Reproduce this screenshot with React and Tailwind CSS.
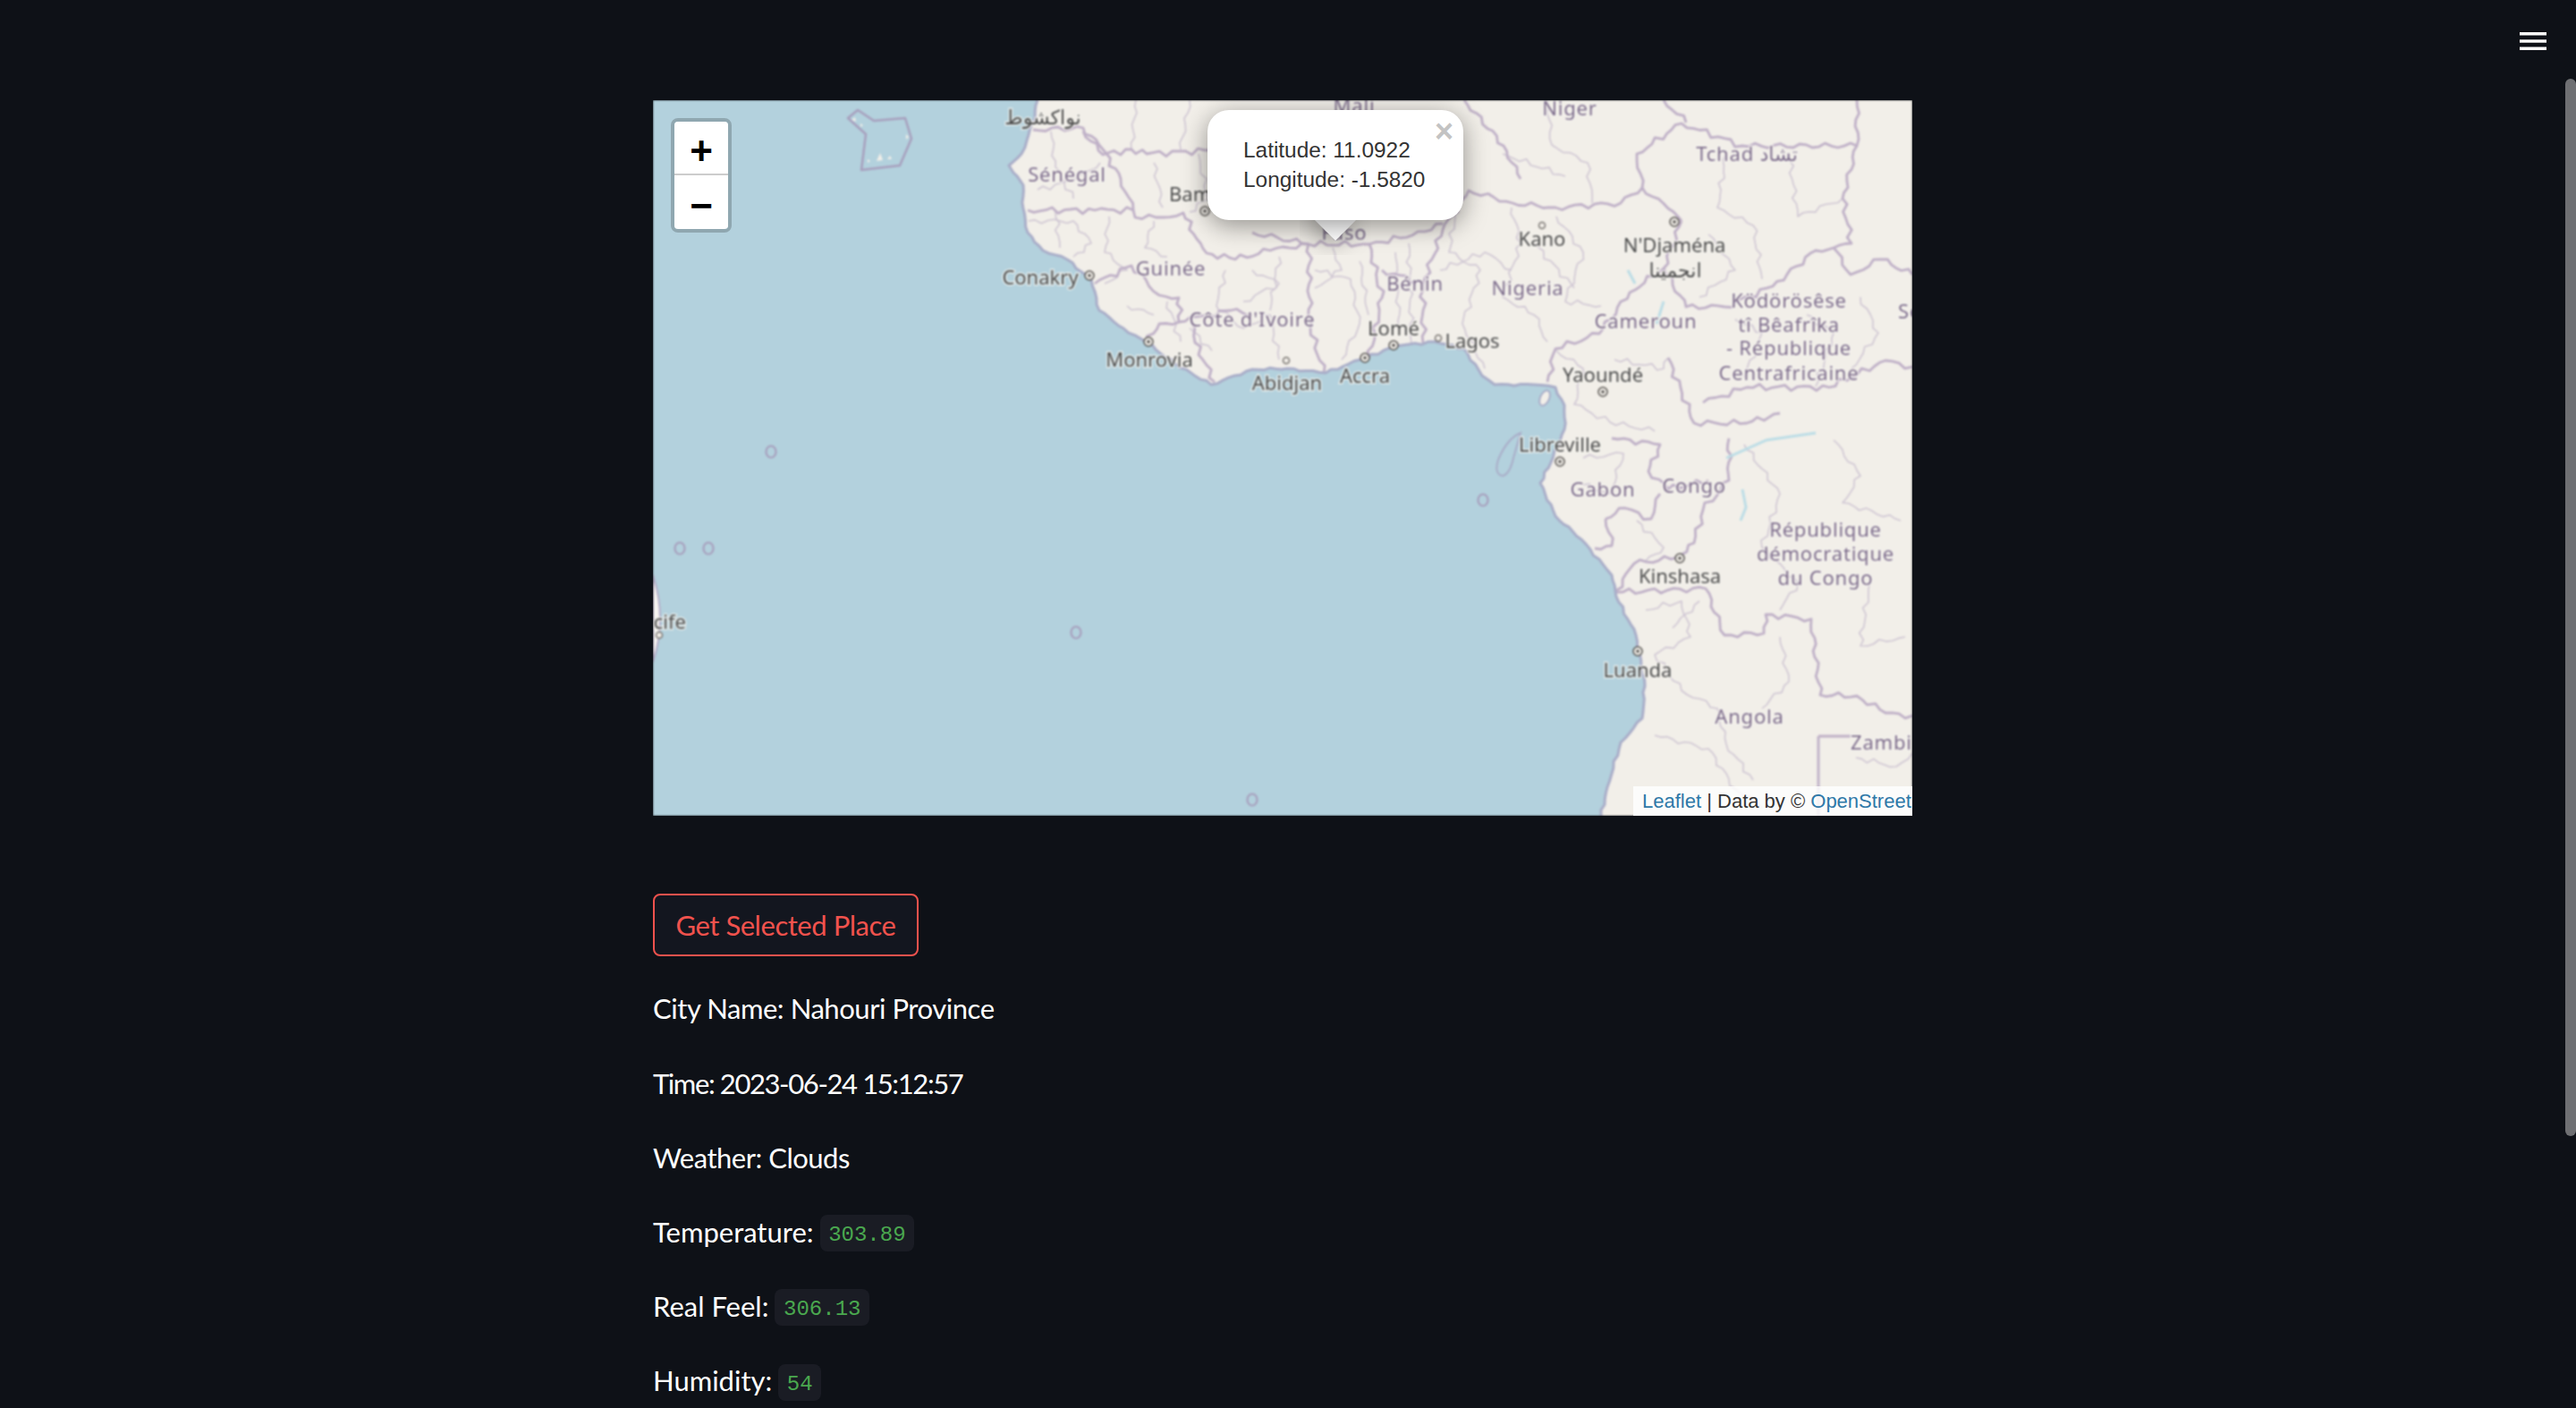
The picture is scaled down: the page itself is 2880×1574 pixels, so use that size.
import React from 'react';

const COAST = 'M430 0 L425 25 L418 45 L412 60 L398 73 L403 81 L414 95 L414 121 L419 148 L436 168 L463 178 L490 201 L499 235 L526 255 L552 271 L584 295 L624 318 L670 301 L709 300 L752 305 L791 290 L830 275 L874 270 L907 278 L927 308 L941 318 L985 318 L1009 321 L1019 341 L1019 368 L1004 405 L992 428 L1009 465 L1038 491 L1072 531 L1077 555 L1099 598 L1109 655 L1106 691 L1082 718 L1067 768 L1060 800';

// country borders
const BORDERS = [
  'M425 33 L481 31 L503 55 L523 88 L537 123 L494 123 L419 123',
  'M481 35 L503 61 L535 55 L552 60 L624 56 L700 50',
  'M537 123 L539 131 L570 131 L593 126 L608 155 L619 171 L651 178 L690 168 L733 161',
  'M494 205 L535 185 L566 218 L588 221 L588 248 L615 241 L646 235 L670 240',
  'M552 271 L566 250 L588 248',
  'M602 248 L606 271 L628 315',
  'M670 148 L733 161 L733 185 L735 255 L750 305',
  'M733 161 L801 161 L849 151 L883 138',
  'M801 161 L815 221 L801 288',
  'M861 205 L861 271',
  'M815 190 L861 205 L883 145 L912 101 L961 115 L1009 120 L1082 115 L1106 98 L1135 121 L1150 135',
  'M1150 135 L1130 188 L1092 215 L1058 261 L1009 278 L1000 315',
  'M1106 98 L1100 60 L1150 26 L1218 51 L1346 51 L1346 0',
  'M1346 51 L1330 110 L1340 160 L1320 165 L1300 168 L1252 208 L1198 231 L1155 231 L1130 188',
  'M1320 165 L1339 195 L1373 178 L1408 195',
  'M907 0 L951 51 L970 88',
  'M1155 25 L1130 0',
  'M1135 288 L1164 361 L1223 361 L1260 350',
  'M1174 338 L1223 321 L1315 321 L1378 291 L1408 298',
  'M1072 378 L1126 385 L1113 415 L1135 435 L1180 425',
  'M1203 378 L1203 425 L1174 458 L1164 495 L1145 511 L1097 518 L1077 548',
  'M1065 468 L1072 498 L1053 501',
  'M1065 468 L1087 456 L1116 468 L1126 440',
  'M1077 550 L1177 546 L1198 598 L1242 596 L1244 575 L1295 580 L1305 665 L1346 666 L1378 685 L1408 688',
];

// provinces, much paler
const THIN = [
  'M445 35 L450 75 L470 110', 'M500 70 L470 90 L430 100', 'M420 135 L470 135 L490 160 L470 175', 'M450 125 L455 165',
  'M510 130 L505 170 L530 190 L505 205', 'M560 135 L550 165 L575 175', 'M540 0 L535 55', 'M600 0 L590 55', 'M610 60 L620 110 L600 125', 'M560 70 L570 120',
  'M640 190 L630 230 L660 255 L690 240 L700 290', 'M700 175 L690 235', 'M600 255 L625 280', 'M530 230 L560 240', 'M575 225 L590 270',
  'M740 190 L780 200 L790 250 L770 290', 'M790 180 L800 240', 'M830 170 L835 260', 'M845 160 L848 272', 'M760 165 L770 190 L740 210', 'M670 190 L700 205 L660 225',
  'M900 110 L890 170 L925 190 L905 250 L930 300', 'M960 120 L970 160 L950 220 L985 240 L1000 270', 'M1010 130 L1040 170 L1020 225 L1060 230', 'M985 160 L1030 210', 'M880 190 L930 170 L960 190',
  'M1000 0 L1005 50 L1045 70 L1050 115', 'M950 60 L1020 85', 'M1200 60 L1190 120 L1230 140 L1240 200', 'M1270 60 L1280 130 L1330 110', 'M1180 150 L1210 190 L1170 220',
  'M1010 280 L1040 300 L1030 340 L1070 360 L1120 370', 'M1075 290 L1130 300 L1135 288', 'M1210 245 L1240 260 L1220 310', 'M1290 240 L1320 260 L1300 320', 'M1350 220 L1370 260 L1340 300',
  'M1040 400 L1085 395 L1070 440 L1040 430', 'M1220 385 L1260 440 L1240 500 L1280 540 L1260 570', 'M1320 380 L1350 420 L1330 450 L1395 470', 'M1360 540 L1350 610 L1400 600', 'M1260 600 L1270 650 L1240 680',
  'M1110 570 L1150 560 L1160 600 L1120 620 L1150 660 L1190 680 L1200 720 L1230 760', 'M1120 710 L1180 725 L1210 770 L1240 790', 'M1345 735 L1390 745 L1408 730', 'M1100 470 L1130 500 L1110 515', 'M1170 560 L1140 590',
];

// roughen a coarse polyline so it reads as a real border
const wiggle = (d, amp) =>
  d.split('M').filter(Boolean).map((part) => {
    const pts = part.trim().split(/\s*L\s*/).map((p) => p.split(' ').map(Number));
    let out = `M${pts[0][0]} ${pts[0][1]}`;
    pts.slice(1).forEach(([x, y], i) => {
      const [px, py] = pts[i];
      const len = Math.hypot(x - px, y - py) || 1;
      const steps = Math.max(1, Math.round(len / 7));
      for (let s = 1; s < steps; s++) {
        const t = s / steps;
        const n = (Math.sin(s * 1.7 + px * 0.13) + 0.6 * Math.sin(s * 3.1 + py * 0.19)) * amp;
        out += ` L${(px + (x - px) * t - ((y - py) / len) * n).toFixed(1)} ${(py + (y - py) * t + ((x - px) / len) * n).toFixed(1)}`;
      }
      out += ` L${x} ${y}`;
    });
    return out;
  }).join(' ');

const COAST_PATH = wiggle(COAST, 1);

const DOTS = [[617, 124], [488, 196], [554, 270], [796, 288], [828, 274], [1142, 136], [1062, 326], [1014, 404], [1148, 512], [1101, 616]];
const OPEN_DOTS = [[708, 291], [878, 266], [994, 140], [7, 598]];
const ISLANDS = [[132, 393], [30, 501], [62, 501], [473, 595], [670, 782], [928, 447]];

const CITIES = [
  ['نواكشوط', 436, 19], ['Bamako', 577, 105, 'start'], ['Conakry', 433, 198], ['Monrovia', 555, 290], ['Abidjan', 709, 316],
  ['Accra', 796, 308], ['Lomé', 828, 255], ['Lagos', 916, 269], ['Kano', 994, 155], ["N'Djaména", 1142, 162], ['انجمينا', 1143, 190],
  ['Yaoundé', 1062, 307], ['Libreville', 1014, 385], ['Kinshasa', 1148, 532], ['Luanda', 1101, 637], ['Recife', 37, 583, 'end'],
];

const COUNTRIES = [
  ['Sénégal', 463, 83], ['Guinée', 579, 188], ["Côte d'Ivoire", 670, 245], ['Bénin', 852, 205], ['Faso', 773, 148], ['Mali', 784, 6],
  ['Niger', 1025, 9], ['Tchad تشاد', 1223, 60], ['Nigeria', 978, 210], ['Cameroun', 1110, 247], ['Ködörösêse', 1270, 224], ['tî Bêafrîka', 1270, 251],
  ['- République', 1270, 277], ['Centrafricaine', 1270, 305], ['Soudan', 1392, 236, 'start'], ['Gabon', 1062, 435], ['Congo', 1164, 431],
  ['République', 1311, 480], ['démocratique', 1311, 507], ['du Congo', 1311, 534], ['Angola', 1226, 689], ['Zambia', 1339, 718, 'start'],
];

const MapDrawing = () => (
  <svg viewBox="0 0 1408 800" className="absolute inset-0 h-full w-full blur-[0.8px]">
    <rect width="1408" height="800" fill="#b3d1dd" />
    <path d={`${COAST_PATH} L1408 800 L1408 0 Z`} fill="#f2efe9" />
    {THIN.map((d) => (
      <path key={d} d={wiggle(d, 2.2)} fill="none" stroke="#cfc6d3" strokeWidth="1.6" strokeLinejoin="round" />
    ))}
    {BORDERS.map((d) => (
      <path key={d} d={wiggle(d, 2.5)} fill="none" stroke="#bfb0c7" strokeWidth="2.8" strokeLinejoin="round" />
    ))}
    <path d="M1303 711 L1339 711 M1303 711 L1303 800" fill="none" stroke="#bfb0c7" strokeWidth="2.8" />
    <path d={COAST_PATH} fill="none" stroke="#a9adc8" strokeWidth="3" strokeLinejoin="round" />
    <path d="M0 531 Q16 580 0 628 Z" fill="#f8f6f2" stroke="#b3abc6" strokeWidth="2" />
    <path d="M218 20 L229 11 L247 23 L282 20 L289 43 L276 73 L233 78 L238 38 Z" fill="#b3d1dd" stroke="#a79fbd" strokeWidth="2.5" strokeLinejoin="round" />
    <path d="M222 22 l4 -3 l1 5 Z M250 68 l4 -9 l3 8 Z M283 38 l3 3 l-3 3 Z M240 66 l3 2 l-3 2 Z M232 26 l3 2 l-3 2 Z M262 66 l3 -4 l2 4 Z" fill="#f2efe9" />
    {/* islands in the gulf */}
    <path d="M970 372 Q955 378 945 402 Q940 418 950 420 Q958 418 962 400 Z" fill="#b3d1dd" stroke="#a9adc8" strokeWidth="2" />
    <ellipse cx="997" cy="333" rx="5" ry="9" transform="rotate(25 997 333)" fill="#f2efe9" stroke="#a9adc8" strokeWidth="2" />
    {/* lakes and rivers */}
    <path d="M1130 225 L1122 250 M1218 435 L1222 455 L1216 470 M1200 400 L1245 380 L1300 372 M1090 190 L1098 205" fill="none" stroke="#bcdde6" strokeWidth="3" />
    {ISLANDS.map(([x, y]) => (
      <ellipse key={x} cx={x} cy={y} rx="5.5" ry="6.5" fill="none" stroke="#a79fbd" strokeWidth="2.2" />
    ))}
    {DOTS.map(([x, y]) => (
      <g key={x}>
        <circle cx={x} cy={y} r="5" fill="#f2efe9" stroke="#55524f" strokeWidth="1.5" />
        <circle cx={x} cy={y} r="1.8" fill="#55524f" />
      </g>
    ))}
    {OPEN_DOTS.map(([x, y]) => (
      <circle key={x} cx={x} cy={y} r="3.5" fill="#f2efe9" stroke="#77736f" strokeWidth="1.5" />
    ))}
    <g className="font-['Noto_Sans','DejaVu_Sans',sans-serif] text-[22px]" dominantBaseline="central" transform="translate(0 -1.5)">
      {CITIES.map(([t, x, y, a]) => (
        <text key={t} x={x} y={y} textAnchor={a || 'middle'} fill="#4a4a4a" stroke="#f6f4ef" strokeOpacity="0.75" strokeWidth="3" paintOrder="stroke">{t}</text>
      ))}
      {COUNTRIES.map(([t, x, y, a]) => (
        <text key={t + x} x={x} y={y} textAnchor={a || 'middle'} fill="#7b6a8a" stroke="#f6f4ef" strokeOpacity="0.75" strokeWidth="3" paintOrder="stroke" letterSpacing="0.8">{t}</text>
      ))}
    </g>
  </svg>
);

const Chip = ({ children }) => (
  <code className="mt-[3px] h-[41px] rounded-lg bg-[#1a1c24] px-[9.6px] pt-[2px] font-['Liberation_Mono',monospace] text-[24px] leading-[41px] text-[#4aa84f]">
    {children}
  </code>
);

const Row = ({ children }) => (
  <div className="mb-8 flex h-[51.2px] items-center gap-[7px] text-[31px] text-white">{children}</div>
);

export default function App() {
  return (
    <div className="relative h-screen overflow-hidden bg-[#0e1117] font-['Lato',sans-serif]">
      <button type="button" className="absolute left-[2817px] top-[36px]">
        <svg width="30" height="20" viewBox="0 0 30 20" className="block">
          <rect y="0" width="30" height="3.5" fill="#fff" />
          <rect y="8.3" width="30" height="3.4" fill="#fff" />
          <rect y="16.5" width="30" height="3.5" fill="#fff" />
        </svg>
      </button>
      <div className="absolute right-0 top-[88px] h-[1182px] w-3 rounded-full bg-[#6f7073]" />

      <div className="mx-auto w-[1408px] -translate-x-[6px] pt-[112px]">
        <div className="relative h-[800px] overflow-hidden">
          <MapDrawing />

          <div className="absolute left-5 top-5 w-[68px] rounded-lg border-4 border-black/20 bg-clip-padding font-['Liberation_Sans',sans-serif] text-black">
            <div className="flex h-[60px] items-center justify-center rounded-t-[4px] border-b-2 border-[#ccc] bg-white pt-[8px] text-[44px] font-bold leading-none">+</div>
            <div className="flex h-[60px] items-center justify-center rounded-b-[4px] bg-white pt-[7px] text-[44px] font-bold leading-none">−</div>
          </div>

          <div className="absolute left-[620px] top-[11px] h-[123px] w-[286px] font-['Liberation_Sans',sans-serif]">
            <div className="absolute left-[103px] top-[122px] h-[40px] w-[80px] overflow-hidden">
              <div className="mx-auto -mt-[17px] h-[34px] w-[34px] rotate-45 bg-white shadow-[0_6px_28px_rgba(0,0,0,0.4)]" />
            </div>
            <div className="relative h-full rounded-3xl bg-white pl-10 pt-[28px] text-[24.4px] leading-[33px] text-[#333] shadow-[0_6px_28px_rgba(0,0,0,0.4)]">
              <div>Latitude: 11.0922</div>
              <div>Longitude: -1.5820</div>
              <span className="absolute right-[11px] top-[6px] text-[36px] font-bold leading-[36px] text-[#c3c3c3]">×</span>
            </div>
          </div>

          <div className="absolute bottom-0 right-0 h-[33px] w-[312px] overflow-hidden whitespace-nowrap bg-white/80 pl-[10px] font-['Liberation_Sans',sans-serif] text-[22px] leading-[33px] text-[#333]">
            <span className="text-[#2e78a8]">Leaflet</span> | Data by © <span className="text-[#2e78a8]">OpenStreet</span>
          </div>
        </div>

        <button type="button" className="mt-[87px] h-[70px] w-[297px] rounded-lg border-2 border-[#f0524d] bg-[#13161f] text-[31px] tracking-[-0.45px] text-[#f0524d]">
          Get Selected Place
        </button>

        <div className="mt-[33px]">
          <Row><span className="tracking-[-0.45px]">City Name: Nahouri Province</span></Row>
          <Row><span className="tracking-[-1.4px]">Time: 2023-06-24 15:12:57</span></Row>
          <Row><span className="tracking-[-0.5px]">Weather: Clouds</span></Row>
          <Row><span>Temperature:</span><Chip>303.89</Chip></Row>
          <Row><span>Real Feel:</span><Chip>306.13</Chip></Row>
          <Row><span>Humidity:</span><Chip>54</Chip></Row>
        </div>
      </div>
    </div>
  );
}
